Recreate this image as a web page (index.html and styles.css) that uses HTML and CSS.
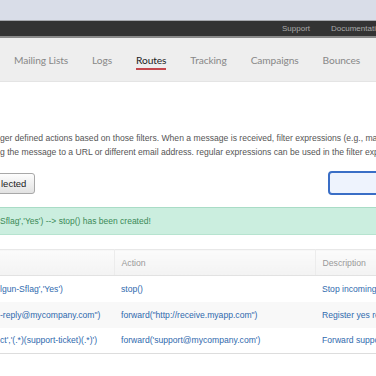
FILE: index.html
```html
<!DOCTYPE html>
<html lang="en">
<head>
    <meta charset="UTF-8">
    <title>Routes</title>
    <link rel="stylesheet" href="styles.css">
</head>
<body>
    <div class="browser"></div>
    <div class="topbar">
        <a class="toplink">Support</a>
        <a class="toplink">Documentation</a>
    </div>
    <div class="nav">
        <a class="tab">Mailing Lists</a>
        <a class="tab">Logs</a>
        <a class="tab active">Routes</a>
        <a class="tab">Tracking</a>
        <a class="tab">Campaigns</a>
        <a class="tab">Bounces</a>
    </div>
    <div class="content">
        <p class="intro">ger defined actions based on those filters. When a message is received, filter expressions (e.g., match_header)<br>g the message to a URL or different email address. regular expressions can be used in the filter expressions.</p>
        <div class="toolbar">
            <button class="botao">lected</button>
            <input class="busca" type="text">
        </div>
        <div class="alerta">Sflag','Yes') --&gt; stop() has been created!</div>
        <table class="rotas">
            <tr>
                <th class="c1"></th>
                <th class="c2">Action</th>
                <th class="c3">Description</th>
            </tr>
            <tr>
                <td class="c1">lgun-Sflag','Yes')</td>
                <td class="c2">stop()</td>
                <td class="c3">Stop incoming spam messages</td>
            </tr>
            <tr class="par">
                <td class="c1">-reply@mycompany.com")</td>
                <td class="c2">forward("http://receive.myapp.com")</td>
                <td class="c3">Register yes replies</td>
            </tr>
            <tr>
                <td class="c1">ct','(.*)(support-ticket)(.*)')</td>
                <td class="c2">forward('support@mycompany.com')</td>
                <td class="c3">Forward support tickets</td>
            </tr>
        </table>
    </div>
</body>
</html>
```

FILE: styles.css
```css
*{
    margin: 0;
    padding: 0;
    box-sizing: border-box;
}
body{
    width: 376px;
    overflow: hidden;
    font-family: "Liberation Sans", Arial, sans-serif;
    background: white;
}
.browser{
    height: 21px;
    background-color: #d9dde8;
    border-bottom: 1px solid #a6a8ad;
}
.topbar{
    height: 17px;
    background-color: #333;
    border-bottom: 2px solid #8a8a8a;
    display: flex;
    gap: 21px;
    padding-left: 282px;
    align-items: center;
    white-space: nowrap;
}
.toplink{
    font-size: 8px;
    color: #aaa;
}
.nav{
    height: 44px;
    background-color: #eee;
    border-bottom: 1px solid #e4e4e4;
    display: flex;
    gap: 24px;
    padding-left: 14px;
    white-space: nowrap;
}
.tab{
    font-family: Lato, sans-serif;
    font-size: 10.2px;
    letter-spacing: -0.1px;
    color: #888;
    padding-top: 16px;
    height: 32px;
    border-bottom: 2px solid transparent;
}
.tab.active{
    color: #222;
    border-bottom-color: #c4474d;
}
.content{
    padding-top: 50px;
}
.intro{
    font-size: 8.6px;
    line-height: 13.5px;
    color: #555;
    white-space: nowrap;
    height: 27px;
}
.toolbar{
    display: flex;
    justify-content: space-between;
    margin-top: 12px;
    height: 24px;
    align-items: center;
}
.botao{
    margin-left: -20px;
    width: 55px;
    height: 21px;
    padding-left: 20px;
    text-align: left;
    font-family: "Liberation Sans", Arial, sans-serif;
    font-size: 9.5px;
    color: #222;
    border: 1px solid #a8a8a8;
    border-radius: 3px;
    background-image: linear-gradient(#fdfdfd, #e2e2e2);
}
.busca{
    width: 60px;
    margin-right: -12px;
    height: 24px;
    border: 2px solid #3a6ec6;
    border-radius: 4px;
    background-color: #eef3fd;
    outline: none;
}
.alerta{
    margin-top: 12px;
    height: 28px;
    background-color: #cbeedf;
    border-top: 1px solid #a9dcc6;
    border-bottom: 1px solid #b6e3cf;
    color: #3b8a58;
    font-size: 8.5px;
    padding-top: 8px;
    white-space: nowrap;
}
.rotas{
    margin-top: 14px;
    border-collapse: collapse;
    width: 420px;
    table-layout: fixed;
    border-bottom: 1px solid #ddd;
    border-top: 1px solid #e8e8e8;
}
.rotas th{
    height: 26px;
    background-image: linear-gradient(#fbfbfb, #f3f3f3);
    border-bottom: 1px solid #e2e2e2;
    border-left: 1px solid #ececec;
    font-weight: normal;
    text-align: left;
    color: #999;
    font-size: 8.7px;
    padding-left: 7px;
}
.rotas th.c1{
    border-left: none;
}
.rotas td{
    height: 26px;
    font-size: 8.6px;
    color: #2f6aae;
    padding-left: 7px;
    white-space: nowrap;
    overflow: hidden;
}
.rotas td.c1{
    padding-left: 0;
}
.c1{
    width: 114px;
}
.c2{
    width: 201px;
}
.par td{
    background-color: #f8f8f8;
}
```
